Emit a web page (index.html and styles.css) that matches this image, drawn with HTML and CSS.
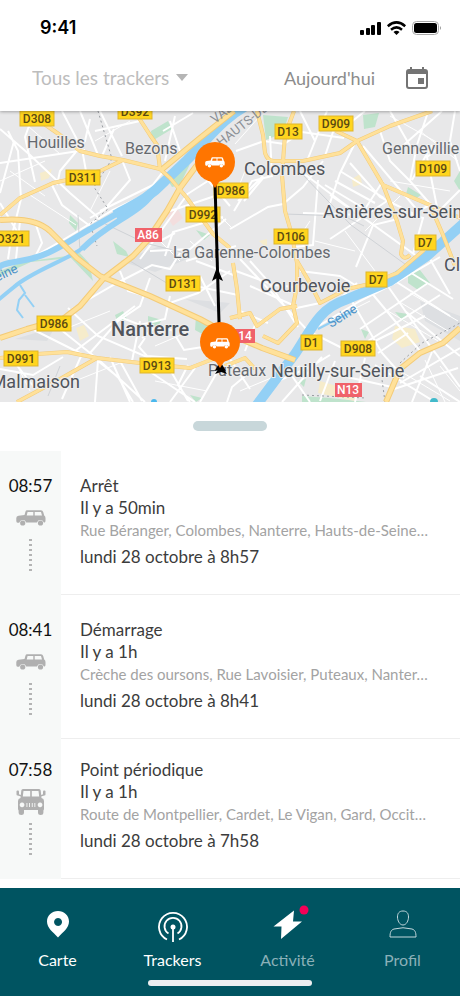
FILE: index.html
```html
<!DOCTYPE html>
<html lang="fr">
<head>
<meta charset="utf-8">
<meta name="viewport" content="width=device-width, initial-scale=1">
<title>Trackers</title>
<link rel="stylesheet" href="styles.css">
</head>
<body>
<svg class="defs" aria-hidden="true">
  <symbol id="car" viewBox="0 0 30 16">
    <path fill-rule="evenodd" d="M11 .3H25q1.700 0 2.200 1.700l1 3.500q1.300.8 1.300 2.500v2.500q.3 2-1.500 2.200a3.700 3.700 0 0 0-7-.2H10.200a3.700 3.700 0 0 0-7 .2H1.500Q.3 12.500.3 11V8q0-2 2.200-2.300L8.500 5l1-3.500Q9.800.3 11 .3zm.6 1.700l-.9 3.500h6.600V2zm7.100 0v3.500h7.300L25 2z"/>
    <circle cx="6.700" cy="13" r="2.600"/><circle cx="24.500" cy="13" r="2.600"/>
  </symbol>
  <symbol id="jeep" viewBox="0 0 30 26">
    <path fill-rule="evenodd" d="M7 0h16q1.500 0 1.700 1.500L25.500 9q2.500.5 2.500 3v7.500q0 1.500-.6 2v2q0 2.500-2.700 2.500T22 23.500V21H8v2.500Q8 26 5.300 26t-2.700-2.500v-2q-.6-.5-.6-2V12q0-2.500 2.500-3l.8-7.500Q5.500 0 7 0zm.5 2l-.7 5.500h7.400V2zm8.300 0v5.500h7.400L22.500 2zM6 13.500a2.400 2.400 0 1 0 .1 0zm18 0a2.400 2.400 0 1 0 .1 0zM10.500 14v4h.9v-4zm2.600 0v4h.9v-4zm2.700 0v4h.9v-4zm2.600 0v4h.9v-4z"/>
    <rect x=".5" y="1.500" width="2.500" height="5" rx="1"/><rect x="27" y="1.500" width="2.500" height="5" rx="1"/>
    <path d="M2 5l3 1v1.500L2 6.500zM28 5l-3 1v1.500l3-1z"/>
  </symbol>
</svg>

<div class="app">
  <header class="top">
    <div class="status">
      <span class="clock">9:41</span>
      <svg class="status-icons" width="84" height="16" viewBox="0 0 84 16" aria-hidden="true">
        <rect x="1" y="10" width="4" height="5" rx="1"/><rect x="7" y="8" width="4" height="7" rx="1"/><rect x="12" y="5" width="4" height="10" rx="1"/><rect x="18" y="2" width="4" height="13" rx="1"/>
        <g fill="none" stroke="#000" stroke-width="2.500"><path d="M28.800 6.200q8.700-7.600 17.400 0"/><path d="M32 9.700q5.500-4.600 11 0"/></g>
        <path d="M34.500 12q3-2.500 6 0l-3 3z"/>
        <rect x="53.500" y="1.500" width="26" height="13" rx="4" fill="none" stroke="#aaa"/><rect x="55" y="3" width="23" height="10" rx="2.500"/><path d="M81 6v4q2-2 0-4z" fill="#999"/>
      </svg>
    </div>
    <div class="filters">
      <div class="picker">
        <select class="picker-select" aria-label="Trackers"><option>Tous les trackers</option></select>
        <svg class="caret" width="12" height="7" viewBox="0 0 12 7" aria-hidden="true"><path d="M0 0h12L6 7z"/></svg>
      </div>
      <button class="date" type="button">Aujourd'hui
        <svg width="24" height="24" viewBox="0 0 24 24" aria-hidden="true"><path fill-rule="evenodd" d="M5 1h2v2h10V1h2v2h1q3 0 3 3v14q0 3-3 3H4q-3 0-3-3V6q0-3 3-3h1zM3 8v12q0 1 1 1h16q1 0 1-1V8zm10 4h6v6h-6z"/></svg>
      </button>
    </div>
  </header>

  <main>
    <svg class="map" viewBox="0 0 460 291" role="img" aria-label="Carte du trajet">
      <rect width="460" height="291" fill="#e8e8e9"/>
      <g fill="#dddfe2">
        <path d="M420 190l40 15v25l-35-20zM120 150l40-15 30 12-35 14zM185 188l45 4-10 10zM15 228l40-12-8 14z"/>
      </g>
      <g fill="#bfe3cc">
        <path d="M151 20l17-10 4 8-20 12zM263 4l25 2-5 16-17 7zM363 4l16-2-4 14-11 2zM70 104l8 8-2 8-7-8zM113 130l13 10 3 6-12-3zM0 160l22-9 45-6 10-6 12 13 4 18-22-23-40 4-31 14zM167 68l23-15-10 21-8 2zM115 204l8-4 4 8-10 2zM148 205l14 4-5 7-9-3zM196 205l18 9-8 11-11-6zM408 76l13 8-7 5-8-6zM408 160l12-1 10 13-12 7-10-7zM395 201l13 2-5 7zM361 218l8 3-4 7zM302 285l28 2 36 4h-64zM190 284l12 3-6 4zM454 70l6-10v20zM298 270l8-2-2 8zM196 119l14 5-6 5z"/>
      </g>
      <g fill="#f6eccb"><path d="M40 62l12-4-3 9-8 3zM76 217l8-3 5 11-9 5zM395 215l20 3 5 13-18 6-10-9zM320 270l40 12-5 8-37-8zM259 130l8-2v9zM352 68l8-5 2 10-9 3z"/></g>
      <path d="M165 103l12-6 6 10-10 8z" fill="#f3dede"/>

      <g fill="none" stroke="#fff" stroke-width="2">
        <path d="M0 18L30 44 70 82 100 108M0 52l33-5 52-8M14 30L0 82M8 20l10 20 3 48-10 40-3 20M33 4l-8 22 10 45M62 0l20 38 4 22M80 0l18 44M90 8L85 30 60 60 57 74M100 0l22 45M114 18L102 45M122 49l8 20-26 30-14 8"/>
        <path d="M52 74l10 20 28 21M20 110l-4 38M34 108l8 24-8 16M0 92l18 30M95 20l45-10M165 58l-20 26-32 15-50 30-28 16M155 73L100 100M175 5l-10 45M163 20l30-18M180 40l-10-30M186 84l28-18M200 60l30 35M187 84L155 128 140 148M170 100l60-20M150 140l40-2 36-30M165 145l8-24 50-15"/>
        <path d="M72 198l45-26 35-18 18 4 10-16M120 160l8 20 42 12 28-10 32-22M68 197l30 28 70 30 20 35M50 210l50 40 45 41M34 219l48 24-20 45M98 250l20 16 15 25M90 242l28-32 22-15 10-28M120 206l20 8 25-6 5-23M140 210l-8 40M75 240l60-45M98 249l-3 42M120 250l22 40M110 246l20 45M140 254l55 37M142 227l12-10 18 2 12 20 25-4M145 227l-6 9 8 9 40 3M170 291l25-34M0 258l33 6 30-18M12 248l22 28M188 254l-10 20 12 17"/>
        <path d="M236 40l28-10 20 3 18-12 42 6M234 100l18-30 20-5-2-40M238 90l25-25M244 90l20-24M230 118l38-22 15-3 20-17 20-26M307 50l20-50M325 45l10-30M315 30L300 0M303 62l40 30 75 54M318 69l-5 65-18 2M303 102l60 2M330 128l60-40M328 98L340 62 355 32M335 70l40 22M340 60l44 27M325 74l40 24 18-28M330 84l44 30M350 52l30 34 40 20M363 35l55 65 12-6M380 20l10 30 20 20 22 25M340 20l25-20M397 40l45-40M410 35l-20-35M410 70l7-36 10-30M412 69l20-35M455 0l-5 30 10 30M447 31l-20 15 10 50M440 99l20-20M403 102l20 5-10 36M398 108l-25 6-17 42"/>
        <path d="M236 160l38 14 20 2M240 148l68 72 40 20M250 175l45 20M320 192l-28 6M250 150l18 20 30 46M240 200l28 12M245 240l10-26M300 160l40 5 20 12M327 200l30-28M310 220l50-30 35-18 45-26M350 187l32 55 22 25M370 180l50 60M387 174l48 68M360 218l68-46M368 230l72-46M378 242l30-20M395 170l55 35M408 160l45 28M430 148l20 35M405 200l55 45M330 244l-20 12-32 14M365 247l-10 44M365 235l60-30M375 254l60 37M400 272l60-35M412 291l20-50M388 280l70-23M420 265l40 26M434 240l26 36M322 246l-40 45M302 256l90 20M335 250l-15 40M290 262l20 29M250 261l-18 15-5 15M196 150l40 15M200 176l38 8M200 165l15 30M186 150l50-15M160 130l15-8M230 248l20 30M200 291l20-35"/>
      </g>
      <g fill="none" stroke="#fff" stroke-width="1">
        <path d="M20 8l40 35M0 70l45-20M30 84l46 30M10 60l35 25M130 10l-35 20M110 60l-20 40M180 150l-20-20M210 95l22 22M190 130l22 20M245 60l-10 25M260 5l-25 28M310 110l-20 30M315 130l40 10M345 120l30 40M420 20l38 30M390 70l60 10M400 85l-35 35M390 5l50 28M240 280l60-25M264 291l30-44M155 270l52 10M75 270l50-20M10 240l20 40M60 220l50-20M155 235l35-15M388 200l50 30M398 190l50 30M410 182l48 28M330 210l40-20M400 260l50 30M440 255l20 25M425 249l20 42"/>
      </g>
      <g fill="none" stroke="#cfd2d6" stroke-width="1"><path d="M78 104l2 38M95 108l50 24 40 10M303 64l48 50 58 42M284 103l60 2 20 10M130 150l50 30M60 255l-12 30"/></g>
      <g fill="none" stroke="#999da2" stroke-dasharray="2 3"><path d="M98 0l14 48-18 28 14 22-18 15 7 22M400 252l22-20 38-20M385 291l-4-30M302 284l64 3"/></g>

      <g fill="none" stroke="#93d0f5">
        <path stroke-width="10" d="M252-8C225 4 208 28 187 49L165 70C146 90 132 94 115 104"/>
        <path stroke-width="6" d="M150 84C120 101 102 111 80 124S45 146 20 150 4 155-4 157M153 82C138 104 110 110 82 138"/>
        <path stroke-width="4" d="M84 136C70 148 32 160 14 176-2 189-4 191-4 191"/>
        <path stroke-width="10" d="M464 112L427 145 390 170 345 189C319 198 312 217 295 243L256 295"/>
        <path stroke-width="2" d="M20 174l5 8-6 7-2 10 6 8M25 184l9 12M318 218l35-18"/>
      </g>
      <circle cx="154" cy="291" r="3" fill="#4bb8ed"/><circle cx="434" cy="291" r="4" fill="#42bacb"/>

      <defs>
        <g id="major">
          <path d="M40 10l20 14 20 16 20 5 23 4 37 9 10 9 17 20 26 36 17 14M137 4l13 20 7 10 3 24M0 104l20-17 33-15 14-3 33-9 23-11M0 247l37-4 30-2 30 6 43 5 50 5 23-9M97 247l-37 21-43 23"/>
          <path d="M257 0l6 24 2 18q3 9 10 8h28l37-8 17-12 33-15 42-15M294 0l-9 24-3 40 3 36 7 24 5 28v23l-4 20 4 17-19 20-15-7M336 20l21 10 26 44 14 36 6 20-2 13q3 7 9 1M383 74l47 20 35 15M430 94l13 30 12 31"/>
          <path d="M233 152l4 26 3 30M230 207l20-5 7 13 23-17 17-3M297 150l13 22 10 20 27-14 23-5 27-11 27-23M225 255l20-8 10 11"/>
        </g>
        <g id="highway">
          <path d="M234 0l-34 27-40 33M0 109q35-3 50 11l27 27 23 18 50 20 50 23 22 12 40 17 33 12M197 54l-17 23-13 23-20 30-14 15-30 23-23 27-17 13-36 10-27 9M460 217l-17 15-23 10-20 16-14 33"/>
        </g>
      </defs>
      <use href="#major" class="road-edge"/><use href="#highway" class="road-edge wide"/>
      <use href="#major" class="road-core"/><use href="#highway" class="road-core wide"/>

      <g class="place small">
        <text x="27" y="37">Houilles</text><text x="125" y="43">Bezons</text><text x="382" y="43">Gennevillie</text><text x="173" y="147">La Garenne-Colombes</text><text x="208" y="265">Puteaux</text>
      </g>
      <g class="place">
        <text x="244" y="64">Colombes</text><text x="323" y="107">Asnières-sur-Sein</text><text x="260" y="181">Courbevoie</text><text x="80" y="277" text-anchor="end">Malmaison</text><text x="271" y="266">Neuilly-sur-Seine</text><text x="444" y="160">Cl</text>
        <text class="city" x="111" y="225">Nanterre</text>
      </g>
      <g class="region"><text transform="translate(215 13) rotate(-38)">VAL</text><text transform="translate(221 36) rotate(-38)">HAUTS-DE</text></g>
      <g class="water"><text transform="translate(331 217) rotate(-32)">Seine</text><text transform="translate(-10 174) rotate(-25)">Seine</text></g>

      <g class="plates">
        <rect x="20" y="0" width="34" height="15"/><rect x="118" y="-7" width="34" height="15"/><rect x="66" y="59" width="34" height="15"/><rect x="-6" y="120" width="35" height="15"/><rect x="186" y="96" width="34" height="15"/><rect x="214" y="72" width="34" height="15"/><rect x="275" y="13" width="27" height="15"/><rect x="319" y="5" width="34" height="15"/><rect x="416" y="50" width="34" height="15"/><rect x="274" y="118" width="34" height="15"/><rect x="415" y="124" width="21" height="15"/><rect x="166" y="165" width="34" height="15"/><rect x="37" y="205" width="34" height="15"/><rect x="4" y="240" width="34" height="15"/><rect x="140" y="247" width="34" height="15"/><rect x="366" y="161" width="21" height="15"/><rect x="301" y="224" width="21" height="15"/><rect x="341" y="230" width="34" height="15"/>
      </g>
      <g class="plate-text">
        <text x="37" y="12">D308</text><text x="135" y="5">D392</text><text x="83" y="71">D311</text><text x="11" y="132">D321</text><text x="203" y="108">D992</text><text x="231" y="84">D986</text><text x="288" y="25">D13</text><text x="336" y="17">D909</text><text x="433" y="62">D109</text><text x="291" y="130">D106</text><text x="425" y="136">D7</text><text x="183" y="177">D131</text><text x="54" y="217">D986</text><text x="21" y="252">D991</text><text x="157" y="259">D913</text><text x="376" y="173">D7</text><text x="311" y="236">D1</text><text x="358" y="242">D908</text>
      </g>
      <g fill="#f0626a"><rect x="135" y="117" width="27" height="14"/><rect x="228" y="218" width="27" height="14"/><rect x="335" y="272" width="27" height="14"/></g>
      <g class="plate-text light"><text x="148" y="128">A86</text><text x="245" y="229">14</text><text x="348" y="283">N13</text></g>

      <path d="M215 72l4 140" stroke="#000" stroke-width="3"/>
      <path d="M217 156l6 14-6-3-5 3zM220 250l6 10-5-2-6 2zM221 254l6 9-6-2-6 2z"/>
      <g fill="#ff7500"><circle cx="215" cy="51" r="20"/><path d="M209 68h12l-6 9z"/><circle cx="220" cy="231" r="20"/><path d="M214 248h12l-6 9z"/></g>
      <use href="#car" x="205" y="46" width="20" height="11" fill="#fff"/>
      <use href="#car" x="210" y="227" width="20" height="11" fill="#fff"/>
    </svg>

    <div class="grip"><span class="grip-bar"></span></div>

    <ol class="events">
      <li class="event">
        <div class="rail"><time>08:57</time><svg class="vehicle" aria-hidden="true"><use href="#car"/></svg><span class="dots"></span></div>
        <div class="detail"><h2>Arrêt</h2><p>Il y a 50min</p><p class="address">Rue Béranger, Colombes, Nanterre, Hauts-de-Seine…</p><p class="when">lundi 28 octobre à 8h57</p></div>
      </li>
      <li class="event">
        <div class="rail"><time>08:41</time><svg class="vehicle" aria-hidden="true"><use href="#car"/></svg><span class="dots"></span></div>
        <div class="detail"><h2>Démarrage</h2><p>Il y a 1h</p><p class="address">Crèche des oursons, Rue Lavoisier, Puteaux, Nanter…</p><p class="when">lundi 28 octobre à 8h41</p></div>
      </li>
      <li class="event compact">
        <div class="rail"><time>07:58</time><svg class="vehicle" aria-hidden="true"><use href="#jeep"/></svg><span class="dots"></span></div>
        <div class="detail"><h2>Point périodique</h2><p>Il y a 1h</p><p class="address">Route de Montpellier, Cardet, Le Vigan, Gard, Occit…</p><p class="when">lundi 28 octobre à 7h58</p></div>
      </li>
    </ol>
  </main>

  <nav class="tabs" aria-label="Navigation principale">
    <div class="tab-row">
      <a class="tab" href="#carte"><svg viewBox="0 0 32 40" aria-hidden="true"><path fill="#fff" fill-rule="evenodd" d="M16 7c6 0 11 4.500 11 10.500C27 24 21 28 16 33.500 11 28 5 24 5 17.500 5 11.500 10 7 16 7zm0 7a4 4 0 1 0 .1 0z"/></svg>Carte</a>
      <a class="tab" href="#trackers"><svg viewBox="0 0 32 40" aria-hidden="true"><g fill="none" stroke="#fff" stroke-width="1.800"><path d="M10 35.500a14 14 0 1 1 12 0M11.500 29.500a8.500 8.500 0 1 1 9 0M16 22v16"/></g><circle cx="16" cy="23" r="2.500" fill="#fff"/></svg>Trackers</a>
      <a class="tab muted" href="#activite"><svg viewBox="0 0 32 40" aria-hidden="true"><path fill="#fff" d="M22 6.500L1.500 22.500h8L9 35l21-17.500h-9z"/><circle cx="32" cy="6" r="4.500" fill="#f50057"/></svg>Activité</a>
      <a class="tab muted" href="#profil"><svg viewBox="0 0 32 40" aria-hidden="true"><g fill="none" stroke="#c3d7dc" stroke-width="1"><path d="M16 7c4 0 5.500 2.500 5.500 6s-2 8-5.500 8-5.500-4.500-5.500-8S12 7 16 7zM3 33c0-5 1-7 4-8q9-2.500 18 0c3 1 4 3 4 8z"/></g></svg>Profil</a>
    </div>
    <span class="home-bar"></span>
  </nav>
</div>
</body>
</html>
```
FILE: styles.css
```css
* { box-sizing: border-box; }

body {
  margin: 0;
  background: #fff;
  color: #3c3c3c;
  font: 17px/22px Lato, sans-serif;
}

h2, p, ol { margin: 0; padding: 0; font: inherit; }

.defs { position: absolute; width: 0; height: 0; }

.app {
  display: flex;
  flex-direction: column;
  min-height: 100vh;
}

main { flex: 1; }

.top {
  position: relative;
  z-index: 1;
  background: #fff;
  box-shadow: 0 1px 3px rgba(0, 0, 0, 0.3);
}

.status {
  display: flex;
  align-items: center;
  justify-content: space-between;
  height: 56px;
  padding: 0 17px 0 40px;
}

.clock {
  color: #000;
  font: 600 18px/22px Inter, sans-serif;
}

.filters {
  display: flex;
  align-items: center;
  justify-content: space-between;
  height: 55px;
  padding: 0 31px 12px 32px;
}

.picker { display: flex; align-items: center; gap: 6px; }

.picker-select,
.date {
  padding: 0;
  border: 0;
  background: none;
  font: 18px/24px Lato, sans-serif;
}

.picker-select {
  appearance: none;
  color: #bdbdbd;
  font-size: 19px;
}

.caret { fill: #b5b5b5; }

.date {
  display: flex;
  align-items: center;
  gap: 30px;
  color: #8c8c8c;
}

.date svg { fill: #747474; }

.map { display: block; width: 100%; overflow: hidden; }
.map text { font-family: Roboto, sans-serif; }
.road-edge { fill: none; stroke: #f3cb78; stroke-width: 4px; stroke-linejoin: round; }
.road-core { fill: none; stroke: #ffe19a; stroke-width: 3px; stroke-linejoin: round; }
.road-edge.wide { stroke-width: 6px; }
.road-core.wide { stroke-width: 4px; }
.place { fill: #50545b; font-size: 18px; paint-order: stroke; stroke: #eee; stroke-width: 2px; }
.place.small { font-size: 16px; fill: #65696f; }
.place .city { font-size: 20px; font-weight: 500; }
.region { fill: #8c9096; font-size: 13px; }
.water { fill: #4b91c7; font-size: 13px; }
.plates { fill: #ffd51e; stroke: #dfb52e; }
.plate-text { fill: #5b4a12; font-size: 12px; font-weight: 500; text-anchor: middle; }
.plate-text.light { fill: #fff; }

.grip {
  display: flex;
  justify-content: center;
  height: 49px;
  padding-top: 19px;
}

.grip-bar {
  width: 74px;
  height: 10px;
  border-radius: 5px;
  background: #c8d7da;
}

.events { list-style: none; }

.event { display: flex; }

.rail {
  display: flex;
  flex: none;
  flex-direction: column;
  align-items: center;
  gap: 7px;
  width: 61px;
  padding-top: 24px;
  background: #f7f9f8;
  color: #111;
}

.vehicle { width: 30px; height: 28px; fill: #b0b0b0; }

.dots {
  width: 3px;
  height: 32px;
  background: repeating-linear-gradient(#b4b4b4 0 2px, transparent 2px 5px);
}

.detail {
  flex: 1;
  min-width: 0;
  padding: 24px 16px 26px 19px;
  border-bottom: 1px solid #eee;
}

.compact .rail,
.compact .detail { padding-top: 20px; }

.address {
  overflow: hidden;
  color: #a3a3a3;
  font-size: 15px;
  text-overflow: ellipsis;
  white-space: nowrap;
}

.when { margin-top: 5px; }

.tabs {
  display: flex;
  flex-direction: column;
  align-items: center;
  gap: 9px;
  padding: 16px 0 10px;
  background: #005461;
  font-size: 16px;
}

.tab-row { display: flex; width: 100%; }

.tab {
  display: flex;
  flex: 1;
  flex-direction: column;
  align-items: center;
  gap: 5px;
  color: #fff;
  text-decoration: none;
}

.tab svg { width: 32px; height: 40px; overflow: visible; }
.tab.muted { color: #8ab0b8; }

.home-bar {
  width: 164px;
  height: 6px;
  border-radius: 3px;
  background: #eceef0;
}
```
